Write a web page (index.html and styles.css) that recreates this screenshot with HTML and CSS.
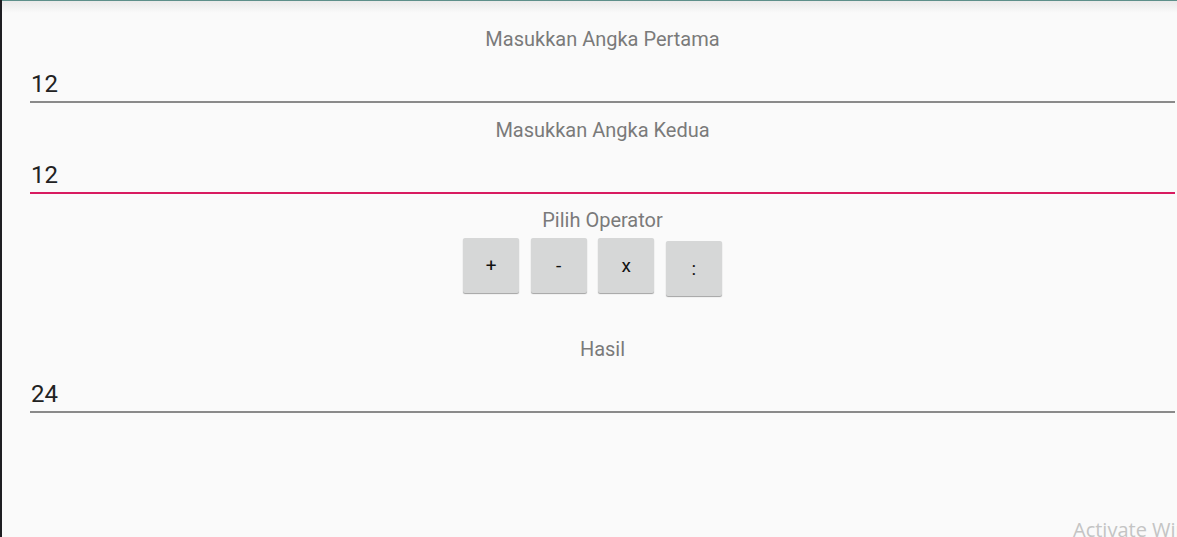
FILE: index.html
```html
<!DOCTYPE html>
<html>
<head>
<meta charset="utf-8">
<link rel="stylesheet" href="styles.css">
</head>
<body>
<div class="frame">
  <div class="edge-left"></div>
  <div class="screen">
    <div class="topbar"></div>
    <div class="content">
      <div class="group">
        <div class="label">Masukkan Angka Pertama</div>
        <div class="field">12</div>
      </div>
      <div class="group">
        <div class="label">Masukkan Angka Kedua</div>
        <div class="field focused">12</div>
      </div>
      <div class="ops">
        <div class="label">Pilih Operator</div>
        <div class="btn-row">
          <div class="btn">+</div>
          <div class="btn">-</div>
          <div class="btn">x</div>
          <div class="btn shifted">:</div>
        </div>
      </div>
      <div class="group result">
        <div class="label">Hasil</div>
        <div class="field">24</div>
      </div>
    </div>
    <div class="watermark">Activate Windows</div>
  </div>
</div>
</body>
</html>
```
FILE: styles.css
```css
html, body {
  margin: 0;
  padding: 0;
  width: 1177px;
  height: 537px;
  overflow: hidden;
  background: #fafafa;
  font-family: Roboto, "Liberation Sans", sans-serif;
}
.frame {
  display: flex;
  width: 1177px;
  height: 537px;
}
.edge-left {
  width: 2px;
  flex: none;
  background: #1e1e22;
}
.screen {
  flex: 1;
  position: relative;
  overflow: hidden;
  background: #fafafa;
}
.topbar {
  position: absolute;
  left: 0;
  right: 0;
  top: 0;
  height: 12px;
  border-top: 1px solid #5e8f8a;
  background: linear-gradient(#e9e9e9, #fafafa);
}
.content {
  position: relative;
  display: flex;
  flex-direction: column;
  padding: 12px 2px 0 28px;
}
.group {
  display: flex;
  flex-direction: column;
  margin-top: 15px;
}
.label {
  font-size: 20px;
  line-height: 24px;
  color: #7a7a7a;
  text-align: center;
}
.field {
  margin-top: 18px;
  font-size: 24px;
  line-height: 28px;
  color: #222;
  padding: 1px 0 3px 1px;
  border-bottom: 2px solid #8a8a8a;
}
.field.focused {
  border-bottom-color: #d81b60;
}
.ops {
  display: flex;
  flex-direction: column;
  margin-top: 14px;
}
.btn-row {
  display: flex;
  justify-content: center;
  align-items: flex-start;
  gap: 11.5px;
  margin-top: 6px;
  margin-right: 20px;
}
.btn {
  width: 56px;
  height: 55px;
  display: flex;
  align-items: center;
  justify-content: center;
  background: #d6d7d7;
  border-radius: 2px;
  box-shadow: 0 1px 1px rgba(0, 0, 0, 0.35);
  font-size: 19px;
  font-weight: 400;
  color: #111;
}
.btn.shifted {
  margin-top: 3px;
}
.group.result {
  margin-top: 41px;
}
.watermark {
  position: absolute;
  left: 1071px;
  top: 516px;
  font-family: "Open Sans", "Noto Sans", sans-serif;
  font-size: 20px;
  line-height: 27px;
  color: #c4c4c4;
  white-space: nowrap;
}
```
